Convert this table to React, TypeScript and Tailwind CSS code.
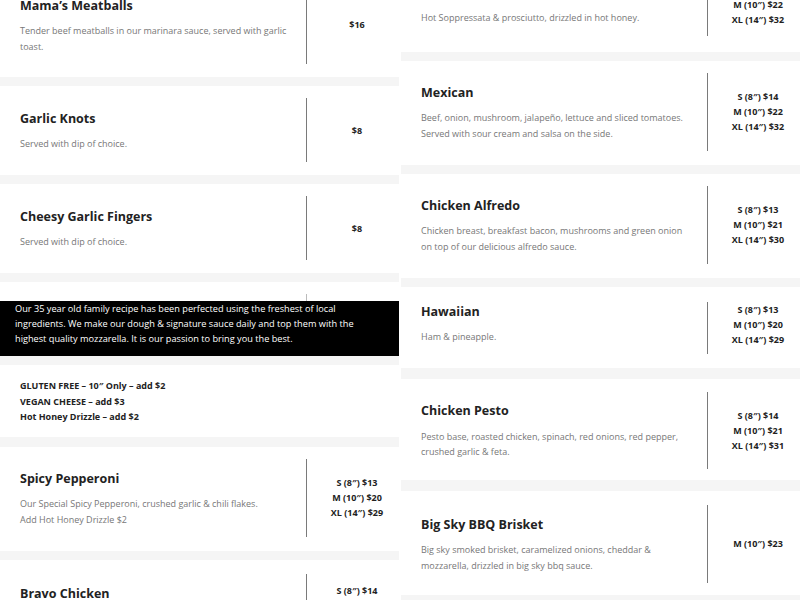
type Item = {
  name: string
  desc: string[]
  prices: string[]
  space: string
  pad: string
  row?: string
  text?: string
  price?: string
}

const LEFT_TOP: Item[] = [
  {
    name: 'Mama’s Meatballs',
    desc: ['Tender beef meatballs in our marinara sauce, served with garlic', 'toast.'],
    prices: ['$16'],
    space: '-mt-[26px]',
    pad: 'pt-3 pb-[13.5px]',
  },
  {
    name: 'Garlic Knots',
    desc: ['Served with dip of choice.'],
    prices: ['$8'],
    space: 'mt-[9px]',
    pad: 'pt-3 pb-[13px]',
  },
  {
    name: 'Cheesy Garlic Fingers',
    desc: ['Served with dip of choice.'],
    prices: ['$8'],
    space: 'mt-[9px]',
    pad: 'pt-3 pb-[13px]',
  },
]

const LEFT_BOTTOM: Item[] = [
  {
    name: 'Spicy Pepperoni',
    desc: ['Our Special Spicy Pepperoni, crushed garlic & chili flakes.', 'Add Hot Honey Drizzle $2'],
    prices: ['S (8″) $13', 'M (10″) $20', 'XL (14″) $29'],
    space: 'mt-[10px]',
    pad: 'pt-3 pb-[14px]',
  },
  {
    name: 'Bravo Chicken',
    desc: ['Grilled chicken, bruschetta tomatoes & balsamic glaze.'],
    prices: ['S (8″) $14', 'M (10″) $21', 'XL (14″) $31'],
    space: 'mt-[9px]',
    pad: 'pt-[14px] pb-[13px]',
  },
]

const RIGHT: Item[] = [
  {
    name: 'Spicy Honey',
    desc: ['Hot Soppressata & prosciutto, drizzled in hot honey.'],
    prices: ['S (8″) $15', 'M (10″) $22', 'XL (14″) $32'],
    space: '-mt-[40px]',
    pad: 'pt-3 pb-[16px]',
  },
  {
    name: 'Mexican',
    desc: [
      'Beef, onion, mushroom, jalapeño, lettuce and sliced tomatoes.',
      'Served with sour cream and salsa on the side.',
    ],
    prices: ['S (8″) $14', 'M (10″) $22', 'XL (14″) $32'],
    space: 'mt-[9px]',
    pad: 'pt-3 pb-[14.5px]',
  },
  {
    name: 'Chicken Alfredo',
    desc: [
      'Chicken breast, breakfast bacon, mushrooms and green onion',
      'on top of our delicious alfredo sauce.',
    ],
    prices: ['S (8″) $13', 'M (10″) $21', 'XL (14″) $30'],
    space: 'mt-[9px]',
    pad: 'pt-3 pb-[14px]',
  },
  {
    name: 'Hawaiian',
    desc: ['Ham & pineapple.'],
    prices: ['S (8″) $13', 'M (10″) $20', 'XL (14″) $29'],
    space: 'mt-[9px]',
    pad: 'pt-[15px] pb-[14px]',
    // this one sits high against its divider
    row: 'min-h-[52px]',
    text: 'justify-start pb-[9px]',
    price: 'justify-start',
  },
  {
    name: 'Chicken Pesto',
    desc: [
      'Pesto base, roasted chicken, spinach, red onions, red pepper,',
      'crushed garlic & feta.',
    ],
    prices: ['S (8″) $14', 'M (10″) $21', 'XL (14″) $31'],
    space: 'mt-[11px]',
    pad: 'pt-[13px] pb-[11px]',
  },
  {
    name: 'Big Sky BBQ Brisket',
    desc: ['Big sky smoked brisket, caramelized onions, cheddar &', 'mozzarella, drizzled in big sky bbq sauce.'],
    prices: ['M (10″) $23'],
    space: 'mt-[10.5px]',
    pad: 'pt-[14.5px] pb-[12.5px]',
  },
]

const EXTRAS = ['GLUTEN FREE – 10″ Only – add $2', 'VEGAN CHEESE – add $3', 'Hot Honey Drizzle – add $2']

function MenuCard({ item }: { item: Item }) {
  return (
    <div className={`bg-white pl-5 ${item.space} ${item.pad}`}>
      <div className={`flex ${item.row ?? 'min-h-[64px]'}`}>
        <div className={`flex w-[286px] shrink-0 flex-col pr-4 ${item.text ?? 'justify-center py-[9.5px]'}`}>
          <h3 className="text-[12.5px] leading-5 font-bold text-[#222]">{item.name}</h3>
          <p className="mt-[7.5px] text-[9px] leading-[15.5px] text-[#777]">
            {item.desc.map((line) => (
              <span key={line} className="block whitespace-nowrap">
                {line}
              </span>
            ))}
          </p>
        </div>
        <div
          className={`flex min-w-0 flex-1 flex-col items-center border-l border-[#7a7a7a] pl-2 ${item.price ?? 'justify-center'}`}
        >
          {item.prices.map((p) => (
            <span key={p} className="text-[9px] leading-[15px] font-bold whitespace-nowrap text-[#222]">
              {p}
            </span>
          ))}
        </div>
      </div>
    </div>
  )
}

export default function App() {
  return (
    <div className="grid h-screen grid-cols-2 gap-[2px] overflow-hidden bg-white font-['Open_Sans',sans-serif]">
      <div className="flex flex-col bg-[#f5f5f5]">
        {LEFT_TOP.map((item) => (
          <MenuCard key={item.name} item={item} />
        ))}

        {/* story banner laid over a card */}
        <div className="mt-[9px] bg-white">
          <div className="h-[19px] pt-[12px]">
            <div className="ml-[306px] h-[7px] border-l border-[#bbb]" />
          </div>
          <div className="h-[55px] bg-black px-[15px] text-[9.2px] leading-[15px] text-white">
            <span className="block">Our 35 year old family recipe has been perfected using the freshest of local</span>
            <span className="block">ingredients. We make our dough &amp; signature sauce daily and top them with the</span>
            <span className="block">highest quality mozzarella. It is our passion to bring you the best.</span>
          </div>
        </div>

        <div className="mt-[9px] bg-white pt-[13px] pb-[12.5px] pl-5">
          {EXTRAS.map((line) => (
            <p key={line} className="text-[9px] leading-[15.5px] font-bold text-[#222]">
              {line}
            </p>
          ))}
        </div>

        {LEFT_BOTTOM.map((item) => (
          <MenuCard key={item.name} item={item} />
        ))}
      </div>

      <div className="flex flex-col bg-[#f5f5f5]">
        {RIGHT.map((item) => (
          <MenuCard key={item.name} item={item} />
        ))}
      </div>
    </div>
  )
}
